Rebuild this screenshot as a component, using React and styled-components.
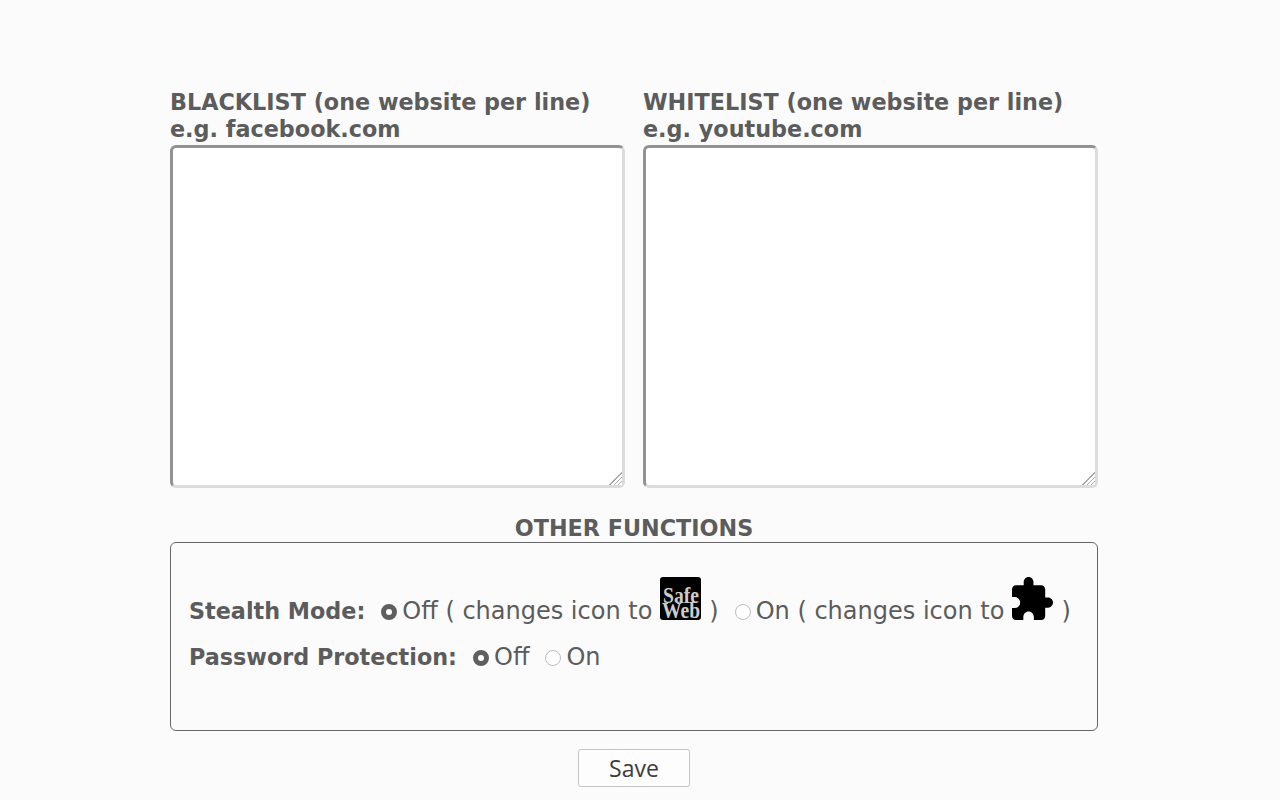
import React from "react";
import styled, { createGlobalStyle } from "styled-components";

const GlobalStyle = createGlobalStyle`
  html, body {
    margin: 0;
    padding: 0;
    background: #fbfbfb;
    overflow: hidden;
  }
  body {
    font-family: "DejaVu Sans", sans-serif;
    color: #5c5c5c;
  }
`;

const Page = styled.div`
  width: 928px;
  margin-left: 170px;
  padding-top: 89px;
`;

const Lists = styled.div`
  display: grid;
  grid-template-columns: 455px 455px;
  column-gap: 18px;
`;

const ListLabel = styled.label`
  display: block;
  font-size: 22.3px;
  font-weight: 700;
  line-height: 27px;
`;

const ListBox = styled.textarea`
  display: block;
  box-sizing: border-box;
  width: 455px;
  height: 343px;
  margin-top: 2px;
  border-width: 3px;
  border-style: solid;
  border-color: #929292 #dcdcdc #dcdcdc #929292;
  border-radius: 6px;
  background: #fff;
  outline: none;

  &::-webkit-resizer {
    background:
      linear-gradient(135deg, #fff 52%, transparent 52%),
      repeating-linear-gradient(135deg, #a8a8a8 0 1px, #fff 1px 3px);
  }
`;

const SectionTitle = styled.h2`
  margin: 27px 0 0;
  font-size: 22.3px;
  font-weight: 700;
  line-height: 27px;
  text-align: center;
`;

const Panel = styled.div`
  box-sizing: border-box;
  height: 189px;
  padding: 34px 18px 0;
  border: 1px solid #666;
  border-radius: 6px;
`;

const OptionRow = styled.div`
  font-size: 24px;
  white-space: nowrap;

  & + & {
    margin-top: 18px;
  }
`;

const OptionName = styled.span`
  font-size: 22.3px;
  font-weight: 700;
  margin-right: 16px;
`;

const Radio = styled.input.attrs({ type: "radio" })`
  appearance: none;
  box-sizing: border-box;
  width: 16px;
  height: 16px;
  margin: 0 5px 0 0;
  border-radius: 50%;
  vertical-align: -1px;
  background: #fff;
  border: ${(p) => (p.defaultChecked ? "5px solid #5f5f5f" : "1px solid #bdbdbd")};
`;

const Choice = styled.label`
  margin-right: ${(p) => p.$gap}px;
`;

const Icon = styled.svg`
  display: inline-block;
  width: 41px;
  height: 43px;
  margin: 0 8px;
  vertical-align: -1px;
  overflow: visible;
`;

const Footer = styled.div`
  display: flex;
  justify-content: center;
  margin-top: 18px;
`;

const SaveButton = styled.button`
  width: 112px;
  height: 38px;
  padding: 0;
  border: 1px solid #c4c4c4;
  border-radius: 3px;
  background: #fdfdfd;
  color: #3c3c3c;
  font-family: "Open Sans", sans-serif;
  font-size: 23px;
`;

const SafeWebIcon = () => (
  <Icon viewBox="0 0 41 43">
    <rect width="41" height="43" rx="3" fill="#000" />
    <text x="21" y="26" textAnchor="middle" fontFamily="Liberation Serif, serif" fontWeight="700" fontSize="23" textLength="36" lengthAdjust="spacingAndGlyphs" fill="#ccc">Safe</text>
    <text x="21" y="41" textAnchor="middle" fontFamily="Liberation Serif, serif" fontWeight="700" fontSize="23" textLength="38" lengthAdjust="spacingAndGlyphs" fill="#ccc">Web</text>
  </Icon>
);

const PuzzleIcon = () => (
  <Icon viewBox="2 1 21 21" preserveAspectRatio="none">
    <path d="M20.5 11H19V7c0-1.1-.9-2-2-2h-4V3.5C13 2.12 11.88 1 10.5 1S8 2.12 8 3.5V5H4c-1.1 0-1.99.9-1.99 2v3.8H3.5c1.49 0 2.7 1.21 2.7 2.7s-1.21 2.7-2.7 2.7H2V20c0 1.1.9 2 2 2h3.8v-1.5c0-1.49 1.21-2.7 2.7-2.7 1.49 0 2.7 1.21 2.7 2.7V22H17c1.1 0 2-.9 2-2v-4h1.5c1.38 0 2.5-1.12 2.5-2.5S21.88 11 20.5 11z" fill="#000" />
  </Icon>
);

export default function App() {
  return (
    <>
      <GlobalStyle />
      <Page>
        <Lists>
          <div>
            <ListLabel htmlFor="blacklist">
              BLACKLIST (one website per line)
              <br />
              e.g. facebook.com
            </ListLabel>
            <ListBox id="blacklist" />
          </div>
          <div>
            <ListLabel htmlFor="whitelist">
              WHITELIST (one website per line)
              <br />
              e.g. youtube.com
            </ListLabel>
            <ListBox id="whitelist" />
          </div>
        </Lists>

        <SectionTitle>OTHER FUNCTIONS</SectionTitle>
        <Panel>
          <OptionRow>
            <OptionName>Stealth Mode:</OptionName>
            <Choice $gap={16}>
              <Radio name="stealth" defaultChecked />
              Off ( changes icon to
              <SafeWebIcon />)
            </Choice>
            <Choice $gap={0}>
              <Radio name="stealth" />
              On ( changes icon to
              <PuzzleIcon />)
            </Choice>
          </OptionRow>
          <OptionRow>
            <OptionName>Password Protection:</OptionName>
            <Choice $gap={16}>
              <Radio name="password" defaultChecked />
              Off
            </Choice>
            <Choice $gap={0}>
              <Radio name="password" />
              On
            </Choice>
          </OptionRow>
        </Panel>
        <Footer>
          <SaveButton>Save</SaveButton>
        </Footer>
      </Page>
    </>
  );
}
